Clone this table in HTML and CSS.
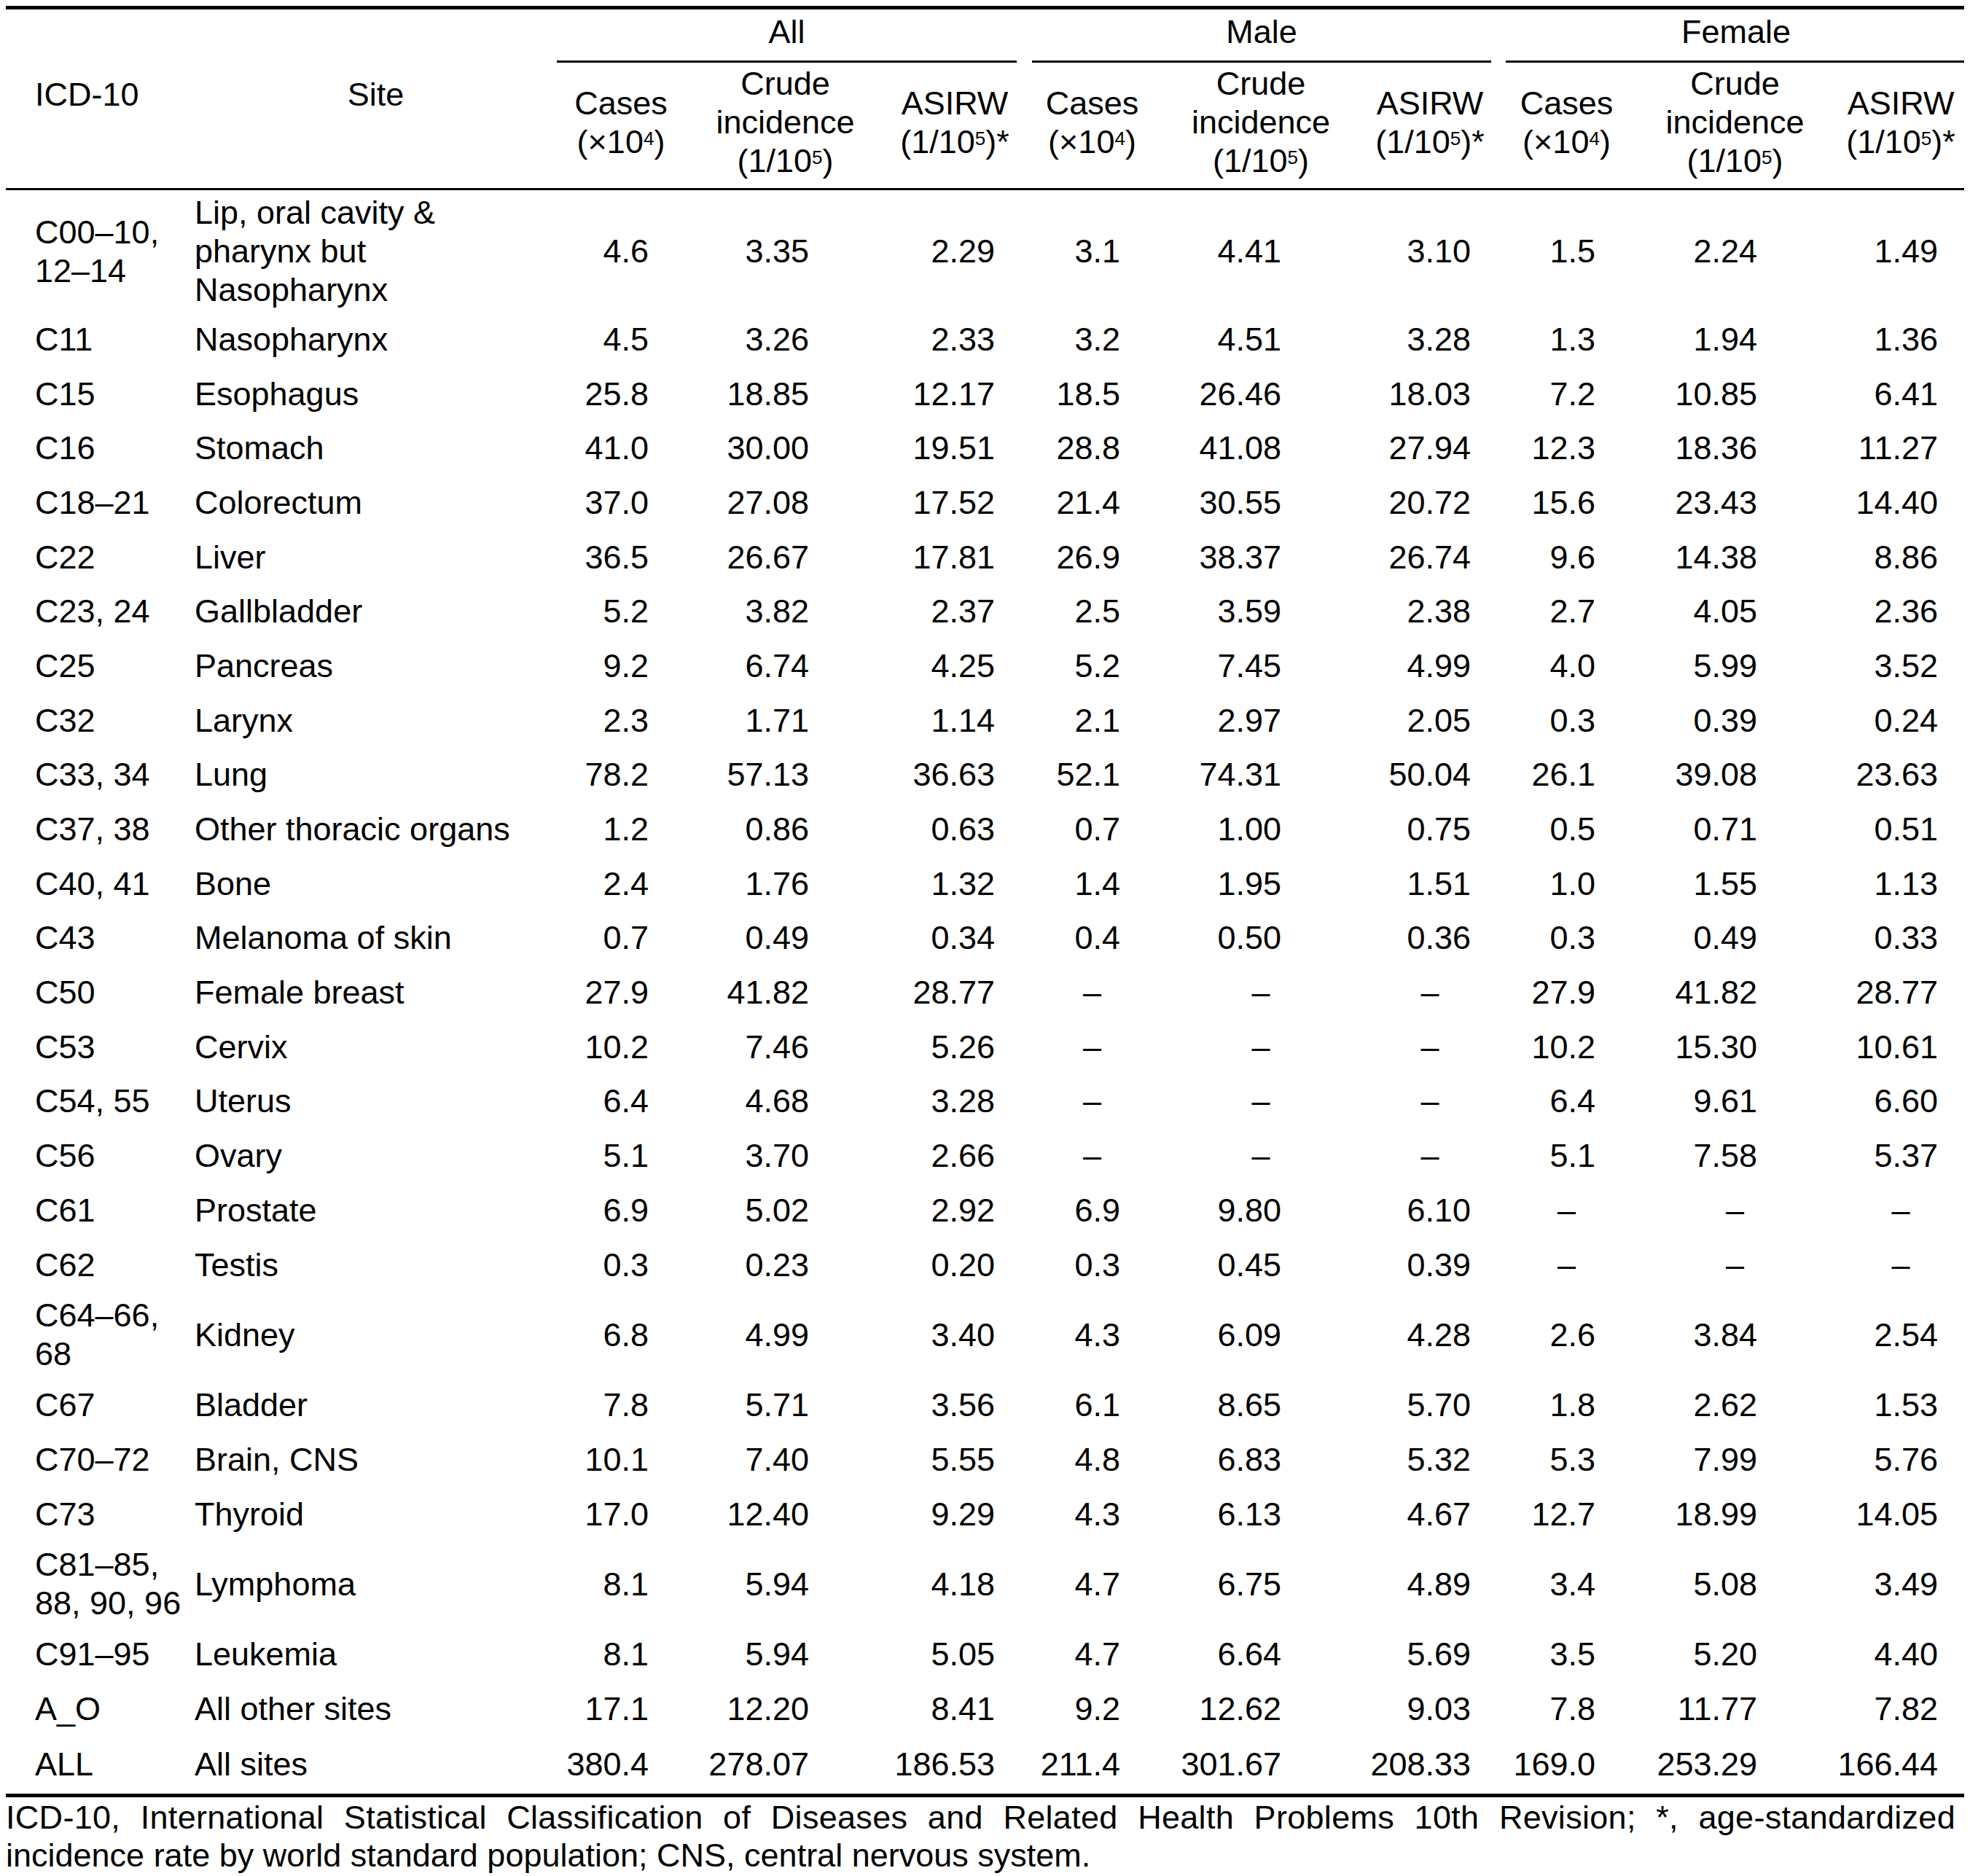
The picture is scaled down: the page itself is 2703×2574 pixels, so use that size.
FILE: index.html
```html
<!DOCTYPE html>
<html lang="en">
<head>
<meta charset="utf-8">
<title>Cancer incidence by site</title>
<link rel="stylesheet" href="styles.css">
</head>
<body>
<table class="tbl">
<colgroup>
<col class="w-icd"><col class="w-site">
<col class="w-cases1"><col class="w-crude"><col class="w-asirw1">
<col class="w-cases"><col class="w-crude2"><col class="w-asirw2">
<col class="w-cases"><col class="w-crude"><col class="w-asirw3">
</colgroup>
<thead>
<tr class="top">
<th rowspan="2" class="h-icd">ICD-10</th>
<th rowspan="2" class="h-site">Site</th>
<th colspan="3" class="grp"><span class="g g-all">All</span></th>
<th colspan="3" class="grp"><span class="g g-male">Male</span></th>
<th colspan="3" class="grp"><span class="g g-female">Female</span></th>
</tr>
<tr class="sub">
<th>Cases<br>(×10<sup>4</sup>)</th>
<th>Crude<br>incidence<br>(1/10<sup>5</sup>)</th>
<th>ASIRW<br>(1/10<sup>5</sup>)*</th>
<th>Cases<br>(×10<sup>4</sup>)</th>
<th>Crude<br>incidence<br>(1/10<sup>5</sup>)</th>
<th>ASIRW<br>(1/10<sup>5</sup>)*</th>
<th>Cases<br>(×10<sup>4</sup>)</th>
<th>Crude<br>incidence<br>(1/10<sup>5</sup>)</th>
<th>ASIRW<br>(1/10<sup>5</sup>)*</th>
</tr>
</thead>
<tbody>
<tr><td>C00–10, 12–14</td><td>Lip, oral cavity &amp; pharynx but Nasopharynx</td><td>4.6</td><td>3.35</td><td>2.29</td><td>3.1</td><td>4.41</td><td>3.10</td><td>1.5</td><td>2.24</td><td>1.49</td></tr>
<tr><td>C11</td><td>Nasopharynx</td><td>4.5</td><td>3.26</td><td>2.33</td><td>3.2</td><td>4.51</td><td>3.28</td><td>1.3</td><td>1.94</td><td>1.36</td></tr>
<tr><td>C15</td><td>Esophagus</td><td>25.8</td><td>18.85</td><td>12.17</td><td>18.5</td><td>26.46</td><td>18.03</td><td>7.2</td><td>10.85</td><td>6.41</td></tr>
<tr><td>C16</td><td>Stomach</td><td>41.0</td><td>30.00</td><td>19.51</td><td>28.8</td><td>41.08</td><td>27.94</td><td>12.3</td><td>18.36</td><td>11.27</td></tr>
<tr><td>C18–21</td><td>Colorectum</td><td>37.0</td><td>27.08</td><td>17.52</td><td>21.4</td><td>30.55</td><td>20.72</td><td>15.6</td><td>23.43</td><td>14.40</td></tr>
<tr><td>C22</td><td>Liver</td><td>36.5</td><td>26.67</td><td>17.81</td><td>26.9</td><td>38.37</td><td>26.74</td><td>9.6</td><td>14.38</td><td>8.86</td></tr>
<tr><td>C23, 24</td><td>Gallbladder</td><td>5.2</td><td>3.82</td><td>2.37</td><td>2.5</td><td>3.59</td><td>2.38</td><td>2.7</td><td>4.05</td><td>2.36</td></tr>
<tr><td>C25</td><td>Pancreas</td><td>9.2</td><td>6.74</td><td>4.25</td><td>5.2</td><td>7.45</td><td>4.99</td><td>4.0</td><td>5.99</td><td>3.52</td></tr>
<tr><td>C32</td><td>Larynx</td><td>2.3</td><td>1.71</td><td>1.14</td><td>2.1</td><td>2.97</td><td>2.05</td><td>0.3</td><td>0.39</td><td>0.24</td></tr>
<tr><td>C33, 34</td><td>Lung</td><td>78.2</td><td>57.13</td><td>36.63</td><td>52.1</td><td>74.31</td><td>50.04</td><td>26.1</td><td>39.08</td><td>23.63</td></tr>
<tr><td>C37, 38</td><td>Other thoracic organs</td><td>1.2</td><td>0.86</td><td>0.63</td><td>0.7</td><td>1.00</td><td>0.75</td><td>0.5</td><td>0.71</td><td>0.51</td></tr>
<tr><td>C40, 41</td><td>Bone</td><td>2.4</td><td>1.76</td><td>1.32</td><td>1.4</td><td>1.95</td><td>1.51</td><td>1.0</td><td>1.55</td><td>1.13</td></tr>
<tr><td>C43</td><td>Melanoma of skin</td><td>0.7</td><td>0.49</td><td>0.34</td><td>0.4</td><td>0.50</td><td>0.36</td><td>0.3</td><td>0.49</td><td>0.33</td></tr>
<tr><td>C50</td><td>Female breast</td><td>27.9</td><td>41.82</td><td>28.77</td><td class="na">–</td><td class="na">–</td><td class="na">–</td><td>27.9</td><td>41.82</td><td>28.77</td></tr>
<tr><td>C53</td><td>Cervix</td><td>10.2</td><td>7.46</td><td>5.26</td><td class="na">–</td><td class="na">–</td><td class="na">–</td><td>10.2</td><td>15.30</td><td>10.61</td></tr>
<tr><td>C54, 55</td><td>Uterus</td><td>6.4</td><td>4.68</td><td>3.28</td><td class="na">–</td><td class="na">–</td><td class="na">–</td><td>6.4</td><td>9.61</td><td>6.60</td></tr>
<tr><td>C56</td><td>Ovary</td><td>5.1</td><td>3.70</td><td>2.66</td><td class="na">–</td><td class="na">–</td><td class="na">–</td><td>5.1</td><td>7.58</td><td>5.37</td></tr>
<tr><td>C61</td><td>Prostate</td><td>6.9</td><td>5.02</td><td>2.92</td><td>6.9</td><td>9.80</td><td>6.10</td><td class="na">–</td><td class="na">–</td><td class="na">–</td></tr>
<tr><td>C62</td><td>Testis</td><td>0.3</td><td>0.23</td><td>0.20</td><td>0.3</td><td>0.45</td><td>0.39</td><td class="na">–</td><td class="na">–</td><td class="na">–</td></tr>
<tr><td>C64–66, 68</td><td>Kidney</td><td>6.8</td><td>4.99</td><td>3.40</td><td>4.3</td><td>6.09</td><td>4.28</td><td>2.6</td><td>3.84</td><td>2.54</td></tr>
<tr><td>C67</td><td>Bladder</td><td>7.8</td><td>5.71</td><td>3.56</td><td>6.1</td><td>8.65</td><td>5.70</td><td>1.8</td><td>2.62</td><td>1.53</td></tr>
<tr><td>C70–72</td><td>Brain, CNS</td><td>10.1</td><td>7.40</td><td>5.55</td><td>4.8</td><td>6.83</td><td>5.32</td><td>5.3</td><td>7.99</td><td>5.76</td></tr>
<tr><td>C73</td><td>Thyroid</td><td>17.0</td><td>12.40</td><td>9.29</td><td>4.3</td><td>6.13</td><td>4.67</td><td>12.7</td><td>18.99</td><td>14.05</td></tr>
<tr><td>C81–85, 88, 90, 96</td><td>Lymphoma</td><td>8.1</td><td>5.94</td><td>4.18</td><td>4.7</td><td>6.75</td><td>4.89</td><td>3.4</td><td>5.08</td><td>3.49</td></tr>
<tr><td>C91–95</td><td>Leukemia</td><td>8.1</td><td>5.94</td><td>5.05</td><td>4.7</td><td>6.64</td><td>5.69</td><td>3.5</td><td>5.20</td><td>4.40</td></tr>
<tr><td>A_O</td><td>All other sites</td><td>17.1</td><td>12.20</td><td>8.41</td><td>9.2</td><td>12.62</td><td>9.03</td><td>7.8</td><td>11.77</td><td>7.82</td></tr>
<tr><td>ALL</td><td>All sites</td><td>380.4</td><td>278.07</td><td>186.53</td><td>211.4</td><td>301.67</td><td>208.33</td><td>169.0</td><td>253.29</td><td>166.44</td></tr>
</tbody>
</table>
<div class="note">
<span class="note-l1">ICD-10, International Statistical Classification of Diseases and Related Health Problems 10th Revision; *, age-standardized</span>
<span class="note-l2">incidence rate by world standard population; CNS, central nervous system.</span>
</div>
</body>
</html>
```

FILE: styles.css
```css
html {
  background: #fff;
}

body {
  margin: 8px;
  font-family: "Liberation Sans", Arial, Helvetica, sans-serif;
  font-size: 45px;
  line-height: 53px;
  color: #000;
  background: #fff;
}

.tbl {
  width: 2690px;
  table-layout: fixed;
  border-collapse: separate;
  border-spacing: 0;
}

.w-icd { width: 259px; }
.w-site { width: 497px; }
.w-cases1 { width: 176px; }
.w-cases { width: 187px; }
.w-crude { width: 275px; }
.w-crude2 { width: 276px; }
.w-asirw1 { width: 190px; }
.w-asirw2 { width: 188px; }
.w-asirw3 { width: 180px; }

th, td {
  font-weight: normal;
  vertical-align: middle;
  padding: 0;
}

sup {
  font-size: 26px;
  line-height: 0;
  vertical-align: 11px;
}

/* header */
.top th {
  border-top: 5px solid #000;
}

.h-icd,
.h-site {
  border-bottom: 3px solid #000;
  padding-bottom: 12px;
}

.h-icd {
  text-align: left;
  padding-left: 40px;
}

.h-site {
  text-align: center;
}

.grp {
  padding: 4px 0 0;
  text-align: center;
  vertical-align: top;
}

.g {
  display: block;
  padding-bottom: 13px;
  border-bottom: 3px solid #000;
}

.g-all { margin-right: 10px; }
.g-male { margin: 0 10px 0 11px; }
.g-female { margin-left: 10px; }

.sub th {
  text-align: center;
  padding: 2px 0 11px;
  border-bottom: 3px solid #000;
}

/* body */
tbody tr {
  height: 74.7px;
}

tbody td {
  padding-top: 6px;
  padding-bottom: 6px;
  text-align: right;
}

tbody tr:first-child td {
  padding-top: 4px;
  padding-bottom: 4px;
}

tbody tr:last-child {
  height: 79px;
}

tbody tr:last-child td {
  padding-top: 12px;
  padding-bottom: 14px;
  border-bottom: 5px solid #000;
}

tbody td:nth-child(1) {
  text-align: left;
  padding-left: 40px;
  padding-right: 10px;
}

tbody td:nth-child(2) {
  text-align: left;
  padding-left: 0;
  padding-right: 30px;
}

tbody td:nth-child(3) { padding-right: 50px; }
tbody td:nth-child(4) { padding-right: 105px; }
tbody td:nth-child(5) { padding-right: 40px; }
tbody td:nth-child(6) { padding-right: 55px; }
tbody td:nth-child(7) { padding-right: 110px; }
tbody td:nth-child(8) { padding-right: 38px; }
tbody td:nth-child(9) { padding-right: 54px; }
tbody td:nth-child(10) { padding-right: 107px; }
tbody td:nth-child(11) { padding-right: 39px; }

tbody td.na {
  text-align: center;
  padding-right: 0;
}

/* footnote */
.note {
  padding: 2px 12px 0 0;
  line-height: 52px;
}

.note-l1 {
  display: block;
  text-align: justify;
  text-align-last: justify;
  letter-spacing: 0.3px;
}

.note-l2 {
  display: block;
}
```
